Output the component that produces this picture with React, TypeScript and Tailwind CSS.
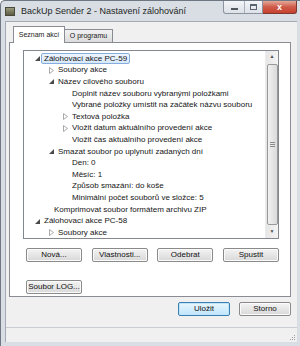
import React from 'react';

type TreeRow = {
  pad: string;
  text: string;
  arrow?: 'open' | 'closed';
  selected?: boolean;
};

const rows: TreeRow[] = [
  { pad: 'pl-[11px]', arrow: 'open', text: 'Zálohovací akce PC-59', selected: true },
  { pad: 'pl-[25px]', arrow: 'closed', text: 'Soubory akce' },
  { pad: 'pl-[25px]', arrow: 'open', text: 'Název cílového souboru' },
  { pad: 'pl-[39px]', text: 'Doplnit název souboru vybranými položkami' },
  { pad: 'pl-[39px]', text: 'Vybrané položky umístit na začátek názvu souboru' },
  { pad: 'pl-[39px]', arrow: 'closed', text: 'Textová položka' },
  { pad: 'pl-[39px]', arrow: 'closed', text: 'Vložit datum aktuálního provedení akce' },
  { pad: 'pl-[39px]', text: 'Vložit čas aktuálního provedení akce' },
  { pad: 'pl-[25px]', arrow: 'open', text: 'Smazat soubor po uplynutí zadaných dní' },
  { pad: 'pl-[39px]', text: 'Den: 0' },
  { pad: 'pl-[39px]', text: 'Měsíc: 1' },
  { pad: 'pl-[39px]', text: 'Způsob smazání: do koše' },
  { pad: 'pl-[39px]', text: 'Minimální počet souborů ve složce: 5' },
  { pad: 'pl-[21px]', text: 'Komprimovat soubor formátem archivu ZIP' },
  { pad: 'pl-[11px]', arrow: 'open', text: 'Zálohovací akce PC-58' },
  { pad: 'pl-[25px]', arrow: 'closed', text: 'Soubory akce' },
  { pad: 'pl-[21px]', text: 'Komprimovat soubor formátem archivu ZIP' },
];

const Arrow = ({ kind }: { kind?: 'open' | 'closed' }) => (
  <span className="w-[9px] h-full flex items-center shrink-0">
    {kind === 'open' && (
      <svg width="5" height="5" viewBox="0 0 5 5">
        <polygon points="5,0 5,5 0,5" fill="#4a4a4a" />
      </svg>
    )}
    {kind === 'closed' && (
      <svg width="5" height="7" viewBox="0 0 5 7">
        <polygon points="0.5,0.5 4.5,3.5 0.5,6.5" fill="none" stroke="#a0a0a0" strokeWidth="0.9" />
      </svg>
    )}
  </span>
);

const Button = ({ label, primary, w = 'w-[56px]' }: { label: string; primary?: boolean; w?: string }) => (
  <button
    className={`${w} h-[14px] rounded-[2px] border text-[8px] leading-none text-[#111] ${
      primary
        ? 'border-[#3c7fb1] bg-gradient-to-b from-[#eaf6fd] to-[#bee6fd] shadow-[inset_0_0_0_1px_#bfe3f7]'
        : 'border-[#8a8a8a] bg-gradient-to-b from-[#f4f4f4] to-[#d8d8d8] shadow-[inset_0_0_0_1px_#fbfbfb]'
    }`}
  >
    {label}
  </button>
);

export default function App() {
  return (
    <div className="w-[300px] h-[346px] overflow-hidden bg-white font-['Liberation_Sans',Arial,sans-serif]">
      <div className="w-[300px] h-[346px] flex flex-col bg-[#d9dee5] border-l border-t border-[#6f7782] rounded-tl-[5px]">
        {/* title bar */}
        <div className="h-[20px] flex items-start relative shrink-0">
          <div className="mt-[6px] ml-[4px] w-[10px] h-[9px] bg-gradient-to-b from-[#9a9a7c] to-[#5c5c44] border border-[#4a4a3a]" />
          <span className="ml-[6px] mt-[4px] text-[9px] text-[#1e1e1e] leading-[12px]">
            BackUp Sender 2 - Nastavení zálohování
          </span>
          <div className="ml-auto flex h-[13px] mr-[3px]">
            <div className="w-[40px] flex rounded-bl-[3px] border border-t-0 border-[#8b939e] bg-gradient-to-b from-[#f3f5f8] to-[#dce1e8]">
              <div className="w-[21px] flex items-center justify-center border-r border-[#a9b0ba]">
                <span className="w-[7px] h-[2px] mt-[3px] bg-[#6b7380] border border-[#50575f]" />
              </div>
              <div className="flex-1 flex items-center justify-center">
                <span className="w-[7px] h-[6px] border border-[#5b6370] border-t-2" />
              </div>
            </div>
            <div className="w-[34px] flex items-center justify-center rounded-br-[3px] border border-t-0 border-l-0 border-[#7a3a32] bg-gradient-to-b from-[#e2a89b] via-[#cf5a48] to-[#c7412f] text-white text-[9px] font-bold leading-none">
              x
            </div>
          </div>
        </div>

        {/* client area */}
        <div className="ml-[4px] mr-[3px] flex-1 flex flex-col bg-[#f0f0f0] border-l border-t border-[#a3aab3]">
          <div className="pt-[3px] pl-[7px] flex items-end h-[20px] shrink-0 text-[7px] text-[#1a1a1a]">
            <div className="h-[17px] w-[52px] bg-white border border-b-0 border-[#898c95] flex items-center justify-center relative top-[1px] z-10">
              Seznam akcí
            </div>
            <div className="h-[13px] w-[48px] border border-l-0 border-b-0 border-[#898c95] bg-gradient-to-b from-[#f2f2f2] to-[#dcdcdc] flex items-center justify-center">
              O programu
            </div>
          </div>

          {/* tab page */}
          <div className="ml-[3px] mr-[6px] h-[255px] bg-white border border-[#898c95] flex flex-col shrink-0">
            <div className="mt-[7px] ml-[13px] mr-[11px] h-[195px] border border-[#828790] flex overflow-hidden">
              <div className="flex-1 pt-[2px] overflow-hidden text-[8px] text-[#151515]">
                {rows.map((r, i) => (
                  <div key={i} className={`h-[11.6px] flex items-center whitespace-nowrap ${r.pad}`}>
                    <Arrow kind={r.arrow} />
                    {r.selected ? (
                      <span className="ml-[-3px] px-[2px] h-[11px] flex items-center border border-[#84acdd] rounded-[2px] bg-gradient-to-b from-[#eef5fd] to-[#d6e8fb]">
                        {r.text}
                      </span>
                    ) : (
                      <span>{r.text}</span>
                    )}
                  </div>
                ))}
              </div>
              {/* scrollbar */}
              <div className="w-[13px] h-full bg-gradient-to-r from-[#e6e6e6] to-[#f4f4f4] flex flex-col items-center border-l border-[#ececec]">
                <div className="h-[12px] flex items-center justify-center text-[5px] text-[#505050]">▲</div>
                <div className="w-[11px] flex-1 my-[1px] rounded-[2px] border border-[#999] bg-gradient-to-r from-[#f1f1f1] to-[#dadada] flex items-center justify-center">
                  <div className="w-[5px] flex flex-col gap-[1px]">
                    <span className="h-px bg-[#8c8c8c]" />
                    <span className="h-px bg-[#8c8c8c]" />
                    <span className="h-px bg-[#8c8c8c]" />
                  </div>
                </div>
                <div className="h-[12px] flex items-center justify-center text-[5px] text-[#505050]">▼</div>
              </div>
            </div>

            <div className="mt-[9px] ml-[16px] mr-[11px] flex justify-between">
              <Button label="Nová..." />
              <Button label="Vlastnosti..." />
              <Button label="Odebrat" />
              <Button label="Spustit" />
            </div>
            <div className="mt-[10px] ml-[16px]">
              <Button label="Soubor LOG..." />
            </div>
          </div>

          <div className="mt-[5px] mr-[6px] flex justify-end gap-[9px]">
            <Button label="Uložit" primary w="w-[52px]" />
            <Button label="Storno" w="w-[52px]" />
          </div>

          {/* status bar */}
          <div className="mt-auto h-[15px] border-t border-[#c9ccd1] bg-[#f0f0f0] flex justify-end items-end pr-[2px] pb-[2px]">
            <div className="grid grid-cols-3 gap-[1px]">
              <span />
              <span />
              <span className="w-px h-px bg-[#a0a0a0]" />
              <span />
              <span className="w-px h-px bg-[#a0a0a0]" />
              <span className="w-px h-px bg-[#a0a0a0]" />
              <span className="w-px h-px bg-[#a0a0a0]" />
              <span className="w-px h-px bg-[#a0a0a0]" />
              <span className="w-px h-px bg-[#a0a0a0]" />
            </div>
          </div>
        </div>
        <div className="h-[4px] shrink-0" />
      </div>
    </div>
  );
}
